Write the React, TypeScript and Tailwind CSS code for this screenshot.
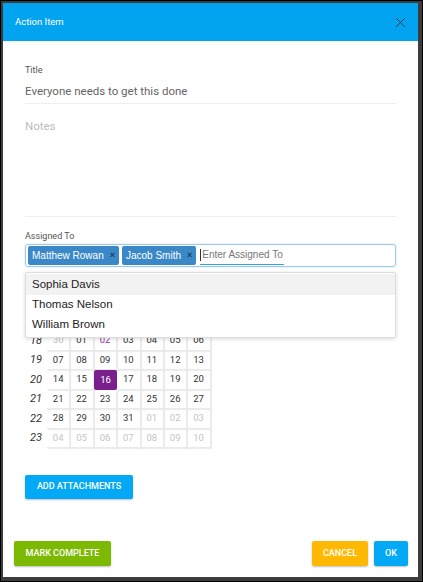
import React from 'react';
import { X } from 'lucide-react';

const weeks: { wk: string; days: { d: string; muted?: boolean; today?: boolean; selected?: boolean }[] }[] = [
  { wk: '18', days: [{ d: '30', muted: true }, { d: '01' }, { d: '02', today: true }, { d: '03' }, { d: '04' }, { d: '05' }, { d: '06' }] },
  { wk: '19', days: [{ d: '07' }, { d: '08' }, { d: '09' }, { d: '10' }, { d: '11' }, { d: '12' }, { d: '13' }] },
  { wk: '20', days: [{ d: '14' }, { d: '15' }, { d: '16', selected: true }, { d: '17' }, { d: '18' }, { d: '19' }, { d: '20' }] },
  { wk: '21', days: [{ d: '21' }, { d: '22' }, { d: '23' }, { d: '24' }, { d: '25' }, { d: '26' }, { d: '27' }] },
  { wk: '22', days: [{ d: '28' }, { d: '29' }, { d: '30' }, { d: '31' }, { d: '01', muted: true }, { d: '02', muted: true }, { d: '03', muted: true }] },
  { wk: '23', days: [{ d: '04', muted: true }, { d: '05', muted: true }, { d: '06', muted: true }, { d: '07', muted: true }, { d: '08', muted: true }, { d: '09', muted: true }, { d: '10', muted: true }] },
];

const Chip: React.FC<{ label: string }> = ({ label }) => (
  <span className="flex items-center h-[19px] pl-[4px] pr-[4px] bg-[#3b88c9] rounded-[2px] text-white text-[10px] font-['Liberation_Sans',sans-serif]">
    {label}
    <span className="ml-[6px] text-[9px] font-bold text-[#1f3e5c]">×</span>
  </span>
);

const App: React.FC = () => {
  return (
    <div className="w-[423px] h-[582px] bg-[#3c3c3c] border border-black pt-[2px] pl-[2px] font-['Roboto',sans-serif]">
      <div className="w-[415px] h-[574px] bg-white flex flex-col">
        {/* header */}
        <div className="h-[38px] shrink-0 bg-[#03a4ef] flex items-center justify-between pl-[12px] pr-[9px]">
          <span className="text-white text-[9.5px]">Action Item</span>
          <X size={17} strokeWidth={1.4} className="text-[#1d3d55]" />
        </div>

        <div className="flex-1 flex flex-col px-[22px]">
          {/* title */}
          <div className="mt-[24px] text-[9px] text-[#555] leading-[11px]">Title</div>
          <div className="mt-[8px] pb-[5px] border-b border-[#eee] text-[11.5px] text-[#666] leading-[14px]">
            Everyone needs to get this done
          </div>

          {/* notes */}
          <div className="mt-[15px] h-[98px] border-b border-[#eee] text-[11.5px] text-[#bbb] leading-[14px]">Notes</div>

          {/* assigned */}
          <div className="mt-[14px] text-[9px] text-[#555] leading-[11px]">Assigned To</div>
          <div className="relative mt-[2px]">
            <div className="h-[23px] border border-[#9cc9ee] rounded-[3px] flex items-center gap-[3px] px-[2px] shadow-[0_0_2px_rgba(60,150,230,0.35)]">
              <Chip label="Matthew Rowan" />
              <Chip label="Jacob Smith" />
              <span className="ml-[1px] h-[18px] flex items-center border-b border-[#2fa2ea] text-[10px] text-[#777] font-['Liberation_Sans',sans-serif] leading-[12px] pr-[1px]">
                <span className="w-px h-[12px] bg-[#333] mr-[1px]" />
                Enter Assigned To
              </span>
            </div>

            {/* dropdown */}
            <div className="absolute left-0 right-0 top-[28px] z-10 bg-white border border-[#ddd] rounded-[2px] shadow-[0_1px_4px_rgba(0,0,0,0.15)] pt-[1px] pb-[3px] font-['Liberation_Sans',sans-serif] text-[11.5px] text-[#222]">
              <div className="h-[21px] flex items-center px-[6px] bg-[#f2f2f2]">Sophia Davis</div>
              <div className="h-[20px] flex items-center px-[6px]">Thomas Nelson</div>
              <div className="h-[19px] flex items-center px-[6px]">William Brown</div>
            </div>

            {/* calendar; its month and weekday header sits under the dropdown */}
            <div className="mt-[4px] w-[186px]">
              <div className="h-[60px]" />
              {weeks.map((w) => (
                <div key={w.wk} className="h-[19.5px] grid grid-cols-[22px_repeat(7,23.4px)] items-stretch">
                  <span className="flex items-center justify-center italic text-[11px] text-[#333]">{w.wk}</span>
                  {w.days.map((c, i) => (
                    <span
                      key={i}
                      className={
                        c.selected
                          ? 'flex items-center justify-center text-[9.5px] bg-[#7b1f8c] text-white rounded-[2px]'
                          : c.today
                          ? 'flex items-center justify-center text-[9.5px] text-[#9b30a8] border-r border-b border-[#eaeaea] shadow-[1px_1px_1px_rgba(0,0,0,0.07)]'
                          : c.muted
                          ? 'flex items-center justify-center text-[9.5px] text-[#c4c4c4] border-r border-b border-[#eaeaea] shadow-[1px_1px_1px_rgba(0,0,0,0.07)]'
                          : 'flex items-center justify-center text-[9.5px] text-[#333] border-r border-b border-[#eaeaea] shadow-[1px_1px_1px_rgba(0,0,0,0.07)]'
                      }
                    >
                      {c.d}
                    </span>
                  ))}
                </div>
              ))}
            </div>
          </div>

          <div className="mt-[24px]">
            <button className="h-[24px] w-[108px] bg-[#03a9f4] text-white text-[9px] font-medium rounded-[2px] shadow-[0_1px_2px_rgba(0,0,0,0.25)]">
              ADD ATTACHMENTS
            </button>
          </div>
        </div>

        {/* footer */}
        <div className="shrink-0 flex items-end justify-between pl-[11px] pr-[10px] pb-[11px]">
          <button className="h-[25px] w-[97px] bg-[#7cb902] text-white text-[9px] font-medium rounded-[2px] shadow-[0_1px_2px_rgba(0,0,0,0.25)]">
            MARK COMPLETE
          </button>
          <div className="flex gap-[6px]">
            <button className="h-[25px] w-[56px] bg-[#ffb902] text-white text-[9px] font-medium rounded-[2px] shadow-[0_1px_2px_rgba(0,0,0,0.25)]">
              CANCEL
            </button>
            <button className="h-[25px] w-[34px] bg-[#03a9f4] text-white text-[9px] font-medium rounded-[2px] shadow-[0_1px_2px_rgba(0,0,0,0.25)]">
              OK
            </button>
          </div>
        </div>
      </div>
    </div>
  );
};

export default App;
